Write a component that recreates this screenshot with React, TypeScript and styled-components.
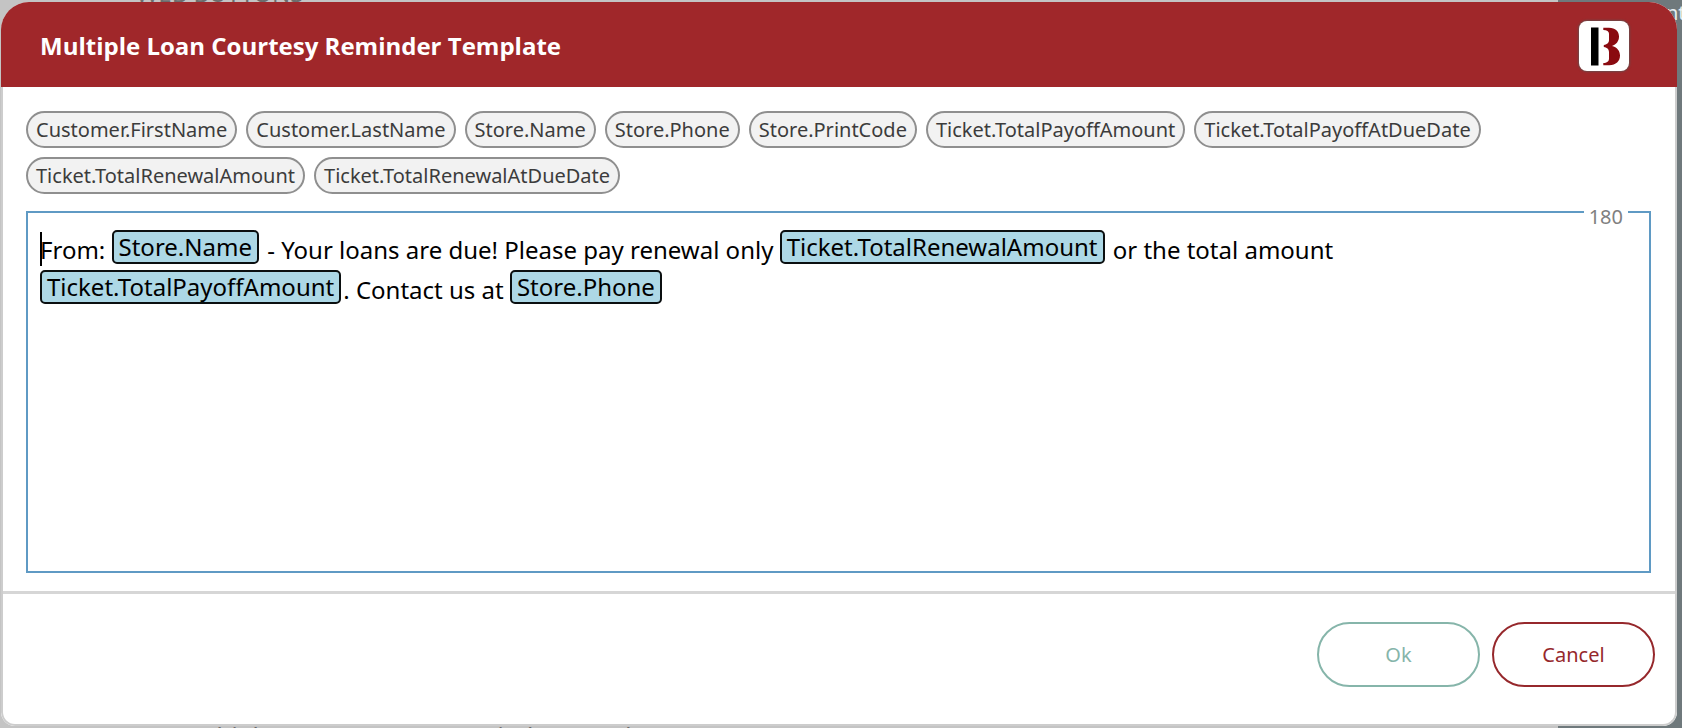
import React, { useState } from 'react';
import styled, { createGlobalStyle } from 'styled-components';

const GlobalStyle = createGlobalStyle`
  *, *::before, *::after { box-sizing: border-box; }
  body {
    margin: 0;
    font-family: 'Noto Sans', 'Open Sans', sans-serif;
    color: #000;
  }
`;

const Page = styled.div`
  position: relative;
  min-height: 100vh;
  padding: 2px 5px 2px 1px;
  overflow: hidden;
`;

const Backdrop = styled.div`
  position: absolute;
  inset: 0;
  display: flex;
  overflow: hidden;
`;

const BackdropMain = styled.div`
  flex: 1;
  display: flex;
  flex-direction: column;
  justify-content: space-between;
  background: #c4c4c4;
  color: #6c6c6c;
  font-size: 24px;
  line-height: 24px;
  white-space: nowrap;
`;

const BackdropHeading = styled.span`
  margin: -19px 0 0 136px;
`;

const BackdropRow = styled.span`
  margin: 0 0 -20px 180px;
`;

const BackdropSide = styled.div`
  width: 124px;
  padding-left: 108px;
  background: #6f797c;
  color: #e6eef2;
  font-size: 20px;
  line-height: 26px;
  white-space: nowrap;
`;

const Dialog = styled.section`
  position: relative;
  display: flex;
  flex-direction: column;
  min-height: calc(100vh - 4px);
  border-radius: 28px 28px 14px 14px;
  background: #fff;
  overflow: hidden;
`;

const Header = styled.header`
  display: flex;
  align-items: center;
  justify-content: space-between;
  height: 85px;
  padding: 0 48px 0 39px;
  background: #a0272a;
`;

const Title = styled.h1`
  margin: 0;
  padding-top: 2px;
  color: #fff;
  font-family: 'Open Sans', 'Noto Sans', sans-serif;
  font-size: 24px;
  font-weight: 700;
  line-height: 32px;
`;

const LogoBox = styled.span`
  display: block;
  width: 50px;
  height: 50px;
  margin-top: 2px;
  border-radius: 8px;
  background: #fff;
  box-shadow: 0 0 2px 1px #6b4a4a;
`;

const Content = styled.div`
  flex: 1;
  display: flex;
  flex-direction: column;
  border: 2px solid #cdcdcd;
  border-top: 0;
  border-radius: 0 0 14px 14px;
`;

const Body = styled.div`
  flex: 1;
  display: flex;
  flex-direction: column;
  gap: 17px;
  padding: 24px 24px 18px 23px;
`;

const ChipList = styled.div`
  display: flex;
  flex-wrap: wrap;
  gap: 9px;
`;

const Chip = styled.button`
  height: 37px;
  padding: 0 8px;
  border: 2px solid #8f8f8f;
  border-radius: 19px;
  background: #f2f2f2;
  color: #3c3c3c;
  font: inherit;
  font-size: 20px;
  line-height: 33px;
  cursor: pointer;
`;

const EditorFrame = styled.div`
  position: relative;
  flex: 1;
  display: flex;
  min-height: 240px;
  border: 2px solid #5f9ac4;
`;

const Editor = styled.div`
  flex: 1;
  padding: 17px 12px;
  font-size: 24px;
  line-height: 40px;
  outline: none;
`;

const Caret = styled.span`
  display: inline-block;
  width: 2px;
  height: 34px;
  margin-right: -2px;
  background: #000;
  vertical-align: -7px;
`;

const Tag = styled.span`
  display: inline-block;
  margin-right: 2px;
  padding: 0 5px;
  border: 2px solid #0b0f10;
  border-radius: 5px;
  background: #add8e6;
  line-height: 30px;
  vertical-align: 3px;
`;

const Counter = styled.span`
  position: absolute;
  top: -10px;
  right: 21px;
  padding: 0 5px;
  background: #fff;
  color: #808080;
  font-size: 20px;
  line-height: 28px;
`;

const Footer = styled.footer`
  display: flex;
  justify-content: flex-end;
  gap: 12px;
  padding: 28px 20px 37px;
  border-top: 3px solid #d6d6d6;
`;

const ActionButton = styled.button<{ $tone: string }>`
  width: 163px;
  height: 65px;
  border: 2px solid ${({ $tone }) => $tone};
  border-radius: 33px;
  background: #fff;
  color: ${({ $tone }) => $tone};
  font: inherit;
  font-size: 20px;
  cursor: pointer;
`;

const FIELDS = [
  'Customer.FirstName',
  'Customer.LastName',
  'Store.Name',
  'Store.Phone',
  'Store.PrintCode',
  'Ticket.TotalPayoffAmount',
  'Ticket.TotalPayoffAtDueDate',
  'Ticket.TotalRenewalAmount',
  'Ticket.TotalRenewalAtDueDate',
];

function Logo() {
  return (
    <LogoBox>
      <svg width="50" height="50" viewBox="0 0 50 50" role="img" aria-label="B">
        <rect x="12" y="6.5" width="7.5" height="38" fill="#000" />
        <path
          d="M24.3 6.8H30C36.5 6.8 40 10.6 40 15.6C40 20.2 37.4 23.6 33 24.9C38 26 41 29.8 41 34.6C41 40.4 37 44.2 30.2 44.2H24.3V42C28 41.6 30 40.4 30 37.4V31.4C30 28.4 28.6 26.8 24.8 26V24C28.6 23.2 30 21.8 30 19V12.8C30 10.2 28 9.2 24.3 9Z"
          fill="#8a0a10"
        />
      </svg>
    </LogoBox>
  );
}

export default function App() {
  const [added, setAdded] = useState<string[]>([]);

  return (
    <>
      <GlobalStyle />
      <Page>
        <Backdrop aria-hidden="true">
          <BackdropMain>
            <BackdropHeading>WEB BUTTONS</BackdropHeading>
            <BackdropRow>Multiple Loan Past Due Reminder Template</BackdropRow>
          </BackdropMain>
          <BackdropSide>nt</BackdropSide>
        </Backdrop>

        <Dialog role="dialog" aria-labelledby="dialog-title">
          <Header>
            <Title id="dialog-title">Multiple Loan Courtesy Reminder Template</Title>
            <Logo />
          </Header>
          <Content>
            <Body>
              <ChipList>
                {FIELDS.map((field) => (
                  <Chip key={field} type="button" onClick={() => setAdded([...added, field])}>
                    {field}
                  </Chip>
                ))}
              </ChipList>
              <EditorFrame>
                <Editor
                  role="textbox"
                  aria-multiline="true"
                  aria-label="Message template"
                  contentEditable
                  suppressContentEditableWarning
                  spellCheck={false}
                >
                  <Caret />
                  From: <Tag>Store.Name</Tag> - Your loans are due! Please pay renewal only{' '}
                  <Tag>Ticket.TotalRenewalAmount</Tag> or the total amount{' '}
                  <Tag>Ticket.TotalPayoffAmount</Tag>. Contact us at <Tag>Store.Phone</Tag>
                  {added.map((field, index) => (
                    <React.Fragment key={index}>
                      {' '}
                      <Tag>{field}</Tag>
                    </React.Fragment>
                  ))}
                </Editor>
                <Counter>180</Counter>
              </EditorFrame>
            </Body>
            <Footer>
              <ActionButton type="button" $tone="#86b5aa">Ok</ActionButton>
              <ActionButton type="button" $tone="#96282c">Cancel</ActionButton>
            </Footer>
          </Content>
        </Dialog>
      </Page>
    </>
  );
}
